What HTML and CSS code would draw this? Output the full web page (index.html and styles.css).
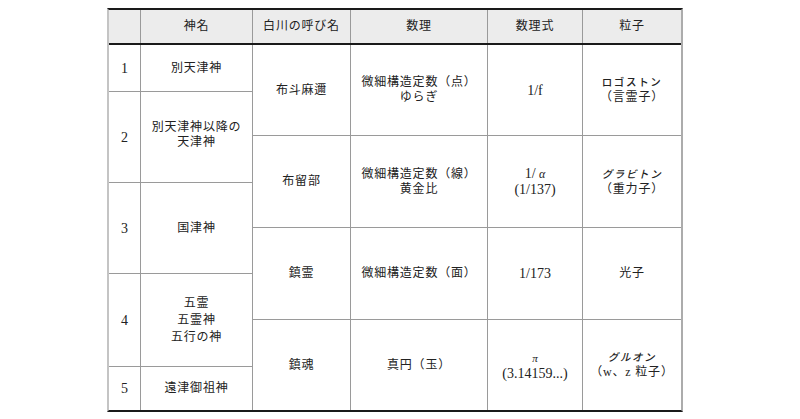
FILE: index.html
```html
<!DOCTYPE html>
<html lang="ja">
<head>
<meta charset="utf-8">
<link rel="stylesheet" href="styles.css">
</head>
<body>
<div class="table">
  <div class="grid head">
    <div class="cell"></div>
    <div class="cell"><p>神名</p></div>
    <div class="cell"><p>白川の呼び名</p></div>
    <div class="cell"><p>数理</p></div>
    <div class="cell"><p>数理式</p></div>
    <div class="cell"><p>粒子</p></div>
  </div>
  <div class="grid body">
    <div class="cell num"><p>1</p></div>
    <div class="cell"><p>別天津神</p></div>
    <div class="cell span2"><p>布斗麻邇</p></div>
    <div class="cell span2"><p>微細構造定数（点）<br>ゆらぎ</p></div>
    <div class="cell span2 lat"><p>1/f</p></div>
    <div class="cell span2"><p><span class="kana">ロゴストン</span><br>（言霊子）</p></div>

    <div class="cell num span2"><p>2</p></div>
    <div class="cell span2 up"><p>別天津神以降の<br>天津神</p></div>

    <div class="cell span2"><p>布留部</p></div>
    <div class="cell span2"><p>微細構造定数（線）<br>黄金比</p></div>
    <div class="cell span2 lat"><p>1/ <i class="greek">α</i><br>(1/137)</p></div>
    <div class="cell span2"><p><span class="kana it">グラビトン</span><br>（重力子）</p></div>

    <div class="cell num span2"><p>3</p></div>
    <div class="cell span2"><p>国津神</p></div>

    <div class="cell span2"><p>鎮霊</p></div>
    <div class="cell span2"><p>微細構造定数（面）</p></div>
    <div class="cell span2 lat"><p>1/173</p></div>
    <div class="cell span2"><p>光子</p></div>

    <div class="cell num span2"><p>4</p></div>
    <div class="cell span2 tall"><p>五霊<br>五霊神<br>五行の神</p></div>

    <div class="cell span2"><p>鎮魂</p></div>
    <div class="cell span2"><p>真円（玉）</p></div>
    <div class="cell span2 lat"><p><i class="greek small">π</i><br>(3.14159...)</p></div>
    <div class="cell span2"><p><span class="kana it">グルオン</span><br>（w、z 粒子）</p></div>

    <div class="cell num"><p>5</p></div>
    <div class="cell"><p>遠津御祖神</p></div>
  </div>
</div>
</body>
</html>
```
FILE: styles.css
```css
html, body {
  margin: 0;
  padding: 0;
  background: #ffffff;
}

body {
  font-family: "Liberation Serif", "Noto Sans CJK JP", serif;
  color: #222222;
}

.table {
  margin: 8px 0 0 107px;
  width: 572px;
  border-left: 2px solid #c4c4c4;
  border-right: 2px solid #acacac;
  border-top: 2px solid #1a1a1a;
  border-bottom: 2px solid #1a1a1a;
}

.grid {
  display: grid;
  grid-template-columns: 31px 111px 97px 136px 94px 98px;
  column-gap: 1px;
  row-gap: 1px;
  background: #9a9a9a;
}

.head {
  grid-template-rows: 33px;
  border-bottom: 2px solid #1a1a1a;
}

.head .cell {
  background: #ececec;
}

.body {
  grid-template-rows: 46px 43px 46px 44px 45px 45px 46px 43px;
}

.cell {
  background: #ffffff;
  display: flex;
  align-items: center;
  justify-content: center;
  text-align: center;
  font-size: 12px;
  letter-spacing: 0.8px;
  line-height: 15px;
}

.cell p {
  margin: 0;
}

.span2 {
  grid-row: span 2;
}

.num {
  font-size: 14px;
  letter-spacing: 0;
}

.lat {
  font-size: 14px;
  letter-spacing: 0;
  line-height: 15px;
}

.greek {
  font-size: 12px;
}

.greek.small {
  font-size: 11px;
}

.kana {
  font-size: 10.5px;
  letter-spacing: 1.6px;
  font-weight: 500;
}

.it {
  font-style: italic;
}

.up p {
  margin-bottom: 4px;
}

.tall {
  line-height: 17px;
}
```
